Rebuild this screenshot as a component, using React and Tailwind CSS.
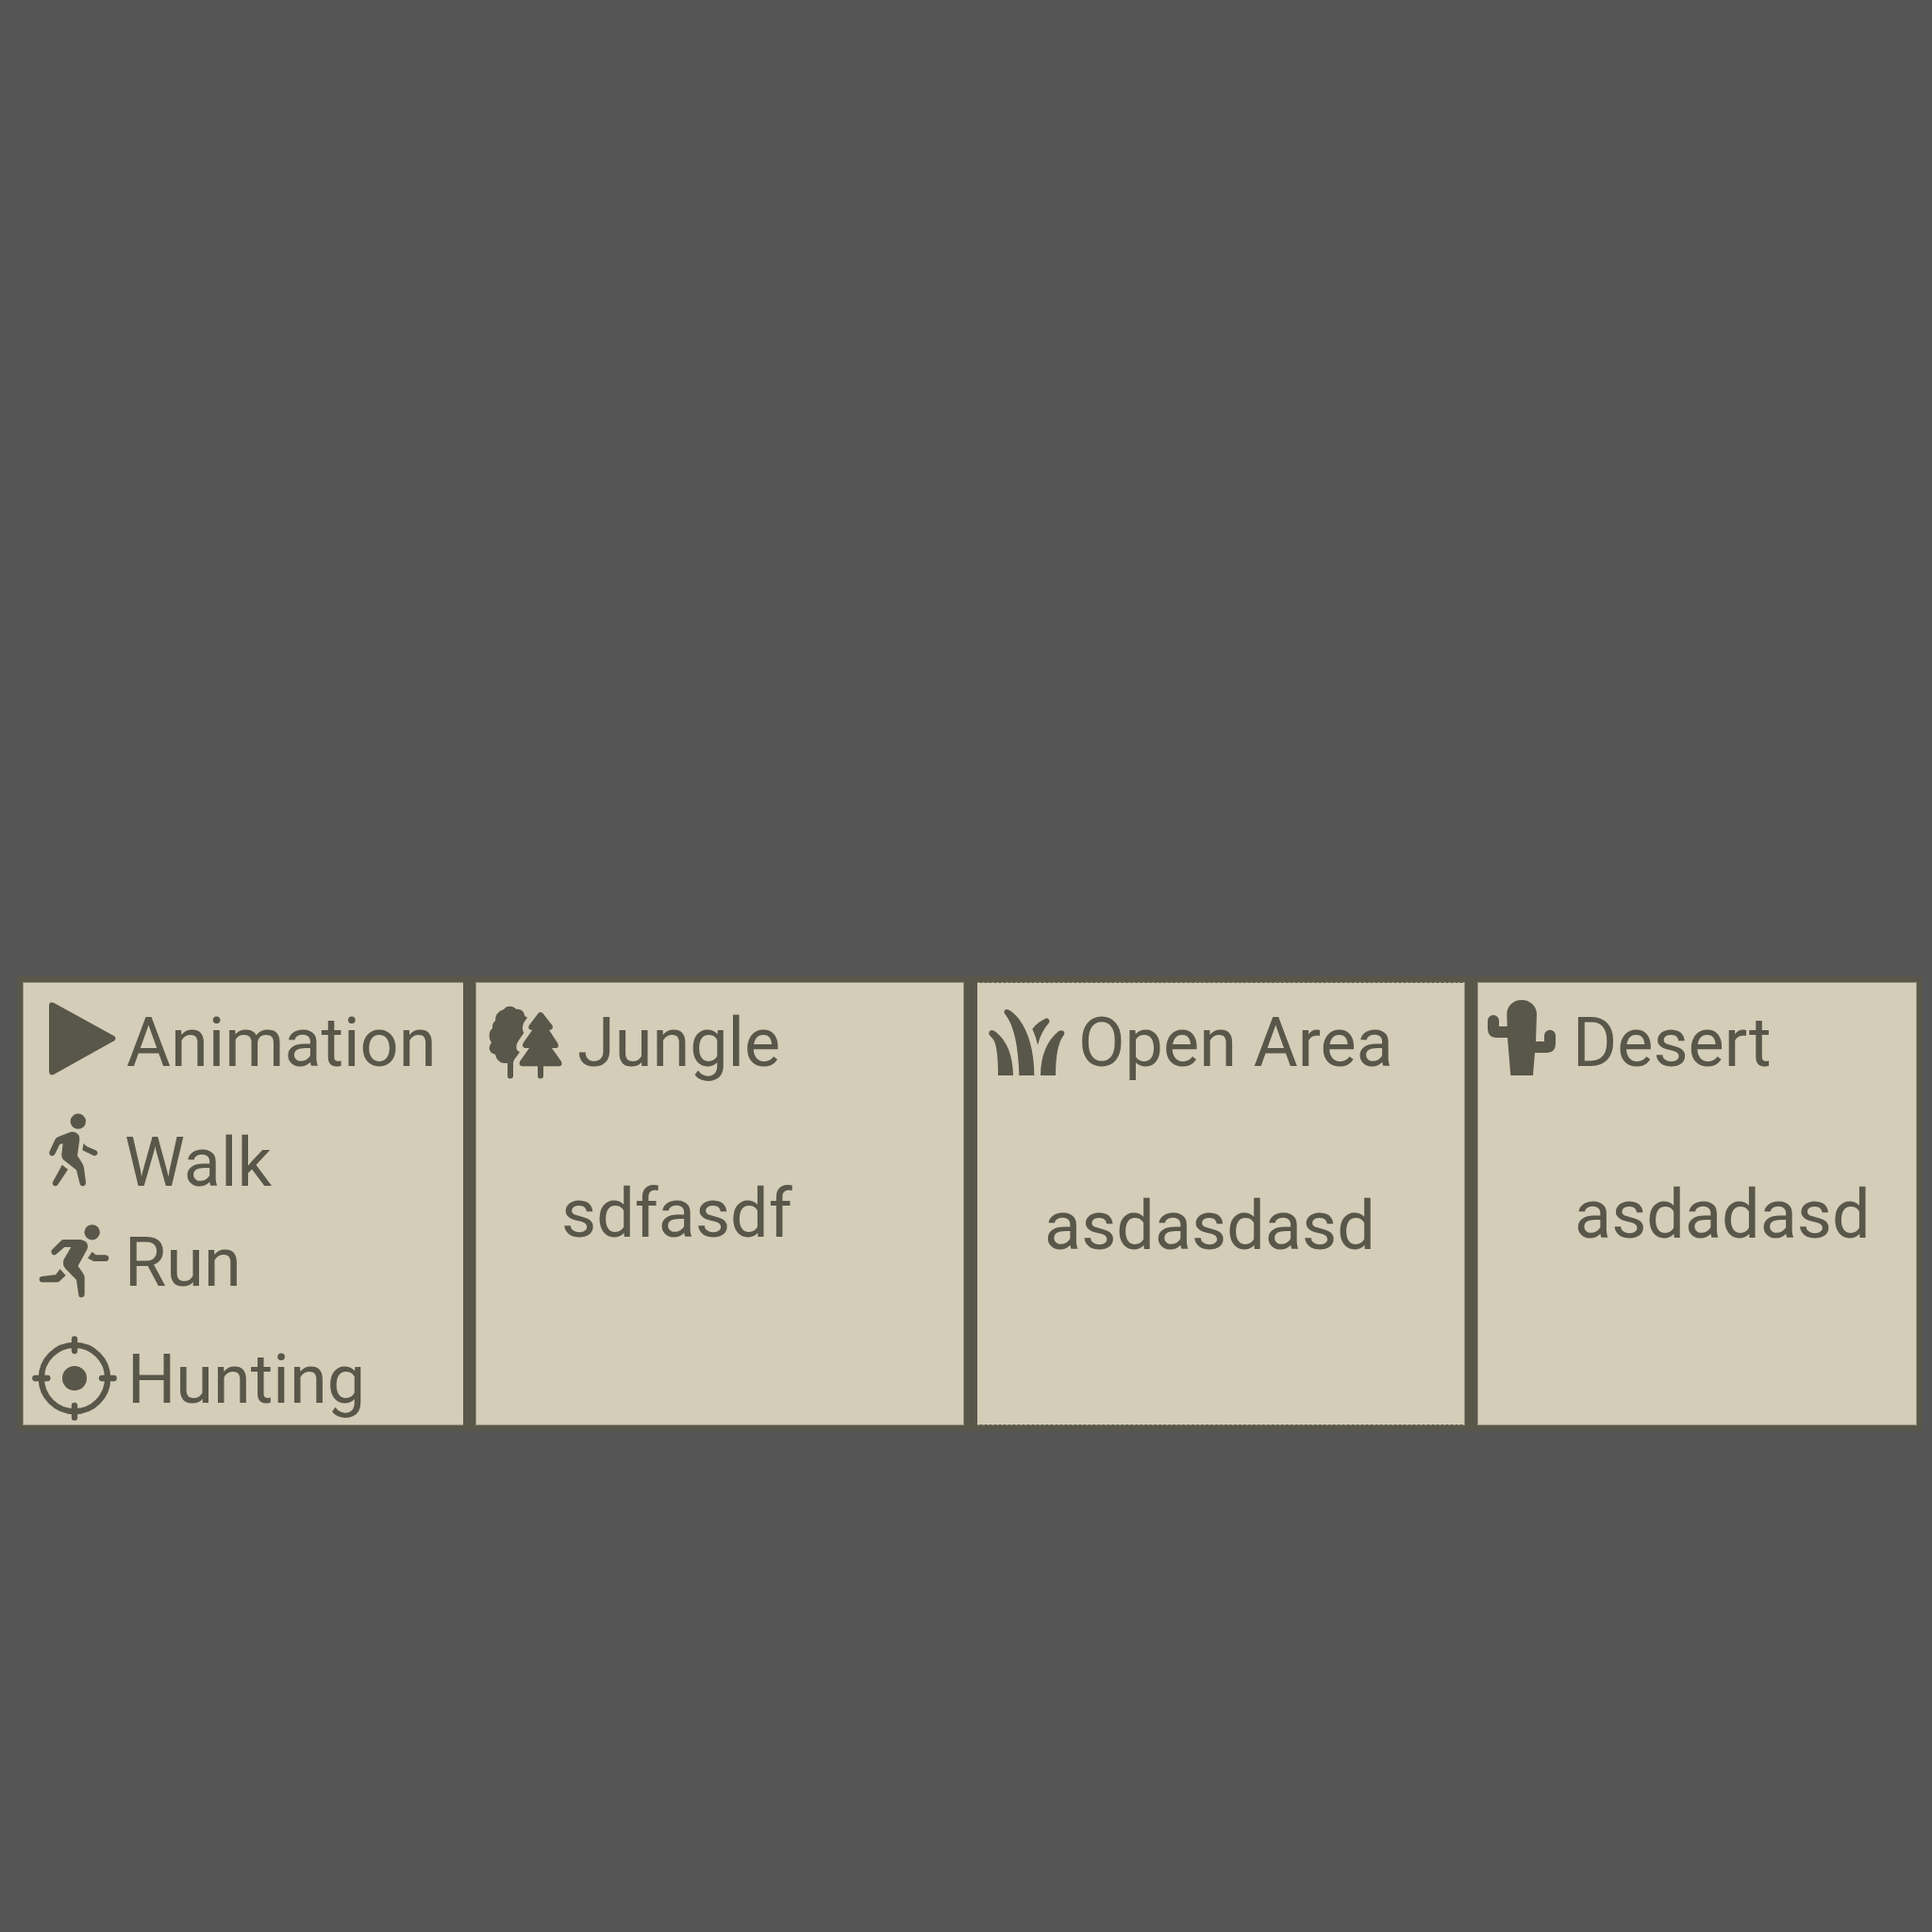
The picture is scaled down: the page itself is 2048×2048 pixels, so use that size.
function Play() {
  return (
    <svg viewBox="126 96 213 234" className="ml-[27px] mt-[20px] h-[78px] w-[71px] shrink-0 fill-[#59564a]">
      <path d="M126 107Q127 93 141 99L333 205Q342 212 333 220L141 327Q127 332 126 318Z" />
    </svg>
  );
}

function Walk() {
  return (
    <svg viewBox="0 0 300 300" className="ml-[5px] h-[100px] w-[100px] shrink-0 fill-[#59564a]">
      <circle cx="158.500" cy="56" r="24.500" />
      <path d="M67 153L84 116Q87 109 94 106L128 92Q137 88 146 90Q165 95 163 115L156 165L170 187Q175 194 177 204L183 250Q183 262 173 262Q166 262 164 254L153 211L113 179Q105 173 106 160L110 127L100 129L85 160Q81 167 74 166Q65 163 67 153Z" />
      <path d="M176 126L186 136L214 148Q222 152 220 160Q216 167 208 165L172 148Z" />
      <path d="M107 194L126 209L94 257Q89 263 82 261Q75 257 78 248L102 205Z" />
    </svg>
  );
}

function Run() {
  return (
    <svg viewBox="0 0 300 300" className="ml-[5px] h-[100px] w-[100px] shrink-0 fill-[#59564a]">
      <circle cx="203" cy="64" r="24.500" />
      <path d="M74 121L105 90Q108 87 113 87L166 87Q190 90 189 111Q188 116 186 120L158 171L174 194Q179 200 179 207L179 262Q178 271 169 271Q161 271 160 263L153 215L118 179Q108 168 112 153Q113 148 117 143L136 111L115 111L87 135Q80 138 75 133Q71 128 74 121Z" />
      <path d="M203 126L215 136L246 136Q256 138 256 147Q255 156 246 156L208 156L189 146Z" />
      <path d="M101 181L119 201L99 220Q96 223 92 223L44 223Q35 222 35 213Q35 205 44 204L87 199Z" />
    </svg>
  );
}

function Target() {
  return (
    <svg viewBox="72 438 270 270" className="ml-[9px] h-[90px] w-[90px] shrink-0 fill-none stroke-[#59564a]">
      <circle cx="207" cy="573" r="105.500" strokeWidth="19" />
      <circle cx="207" cy="573" r="39" className="fill-[#59564a] stroke-none" />
      <path d="M82 573H121M294 573H332M207 448V486M207 660V698" strokeWidth="19" strokeLinecap="round" />
    </svg>
  );
}

function Trees() {
  return (
    <svg viewBox="0 0 300 300" className="ml-[5px] mt-[13px] h-[100px] w-[100px] shrink-0 fill-[#59564a]">
      <path d="M182 57Q189 51 196 57L227 97Q230 109 220 110L216 110L244 153Q249 166 239 168L225 168L255 211Q260 224 249 226L198 226L198 257Q197 265 189 265Q180 265 180 257L180 226L130 226Q119 224 123 211L153 168L141 168Q129 166 133 153L163 110L158 110Q148 109 152 97Z" />
      <path d="M73 44Q78 35 92 35Q106 36 111 44L118 44Q136 47 139 66L147 71L136 87Q129 100 134 116L136 119L118 146Q110 158 113 172Q114 176 123 181L108 201Q103 207 102 214L102 257Q101 265 93 265Q84 265 84 257L84 216L73 216Q51 214 45 188Q26 184 26 168Q26 160 33 151Q26 143 26 130Q26 112 36 106Q35 88 45 82Q44 54 73 44Z" />
    </svg>
  );
}

function Grass() {
  return (
    <svg viewBox="114 117 243 216" className="ml-[12px] mt-[27px] h-[72px] w-[81px] shrink-0 fill-[#59564a]">
      <path d="M116 201Q112 188 123 186Q130 186 138 193Q190 235 192 330L144 330Q144 245 131 219Q128 213 116 201Z" />
      <path d="M164 132Q161 120 173 120Q185 121 210 150Q258 215 259 330L211 330Q207 190 169 139Z" />
      <path d="M253 182Q270 160 298 148Q309 150 307 161Q281 190 270 233Q264 205 253 182Z" />
      <path d="M279 330Q280 235 337 189Q349 183 354 191Q357 198 352 203Q327 235 327 330Z" />
    </svg>
  );
}

function Cactus() {
  return (
    <svg viewBox="111 90 216 240" className="ml-[10px] mt-[18px] h-[80px] w-[72px] shrink-0 fill-[#59564a]">
      <path d="M172 136C172 108 193 90 219 90S267 108 267 136L264 222L291 222L291 203a18 18 0 0 1 36 0L327 232Q325 257 300 258L261 258L255 330L184 330L174 210L137 210Q113 209 111 184L111 156a18 18 0 0 1 36 0L147 174L173 174Z" />
    </svg>
  );
}

export default function App() {
  return (
    <div className="h-[2048px] w-[2048px] overflow-hidden bg-[#555555] pl-[18px] pt-[1035px] font-['Roboto',sans-serif] text-[72px] leading-[84px] text-[#59564a]">
      <main className="flex h-[482px] w-[2020px] whitespace-nowrap bg-[#59564a] pb-[6px] pl-[6px] pt-[6px]">
        <section className="h-[470px] w-[467px] shrink-0 border-b border-l border-t border-[#97927f] bg-[#d4cdb7]">
          <div className="flex h-[128px] items-start">
            <Play />
            <h2 className="ml-[11px] mt-[22px]">Animation</h2>
          </div>
          <div className="flex h-[115px] items-start">
            <Walk />
            <span className="ml-[2px] mt-[21px]">Walk</span>
          </div>
          <div className="flex h-[131px] items-start">
            <Run />
            <span className="ml-[2px] mt-[12px]">Run</span>
          </div>
          <div className="flex items-start">
            <Target />
            <span className="ml-[11px] mt-[5px]">Hunting</span>
          </div>
        </section>
        <section className="ml-[13px] h-[470px] w-[518px] shrink-0 border border-[#97927f] bg-[#d4cdb7]">
          <div className="flex h-[181px] items-start">
            <Trees />
            <h2 className="ml-[2px] mt-[22px]">Jungle</h2>
          </div>
          <p className="ml-[90px] mt-[22px]">sdfasdf</p>
        </section>
        <section className="ml-[14px] h-[470px] w-[517px] shrink-0 border-b border-r border-t border-[#97927f] bg-[#d4cdb7] bg-clip-padding [border-style:dashed_solid]">
          <div className="flex h-[181px] items-start">
            <Grass />
            <h2 className="ml-[14px] mt-[22px]">Open Area</h2>
          </div>
          <p className="ml-[71px] mt-[35px]">asdasdasd</p>
        </section>
        <section className="ml-[13px] h-[470px] w-[466px] shrink-0 border border-[#97927f] bg-[#d4cdb7]">
          <div className="flex h-[181px] items-start">
            <Cactus />
            <h2 className="ml-[18px] mt-[22px]">Desert</h2>
          </div>
          <p className="ml-[102px] mt-[23px]">asdadasd</p>
        </section>
      </main>
    </div>
  );
}
